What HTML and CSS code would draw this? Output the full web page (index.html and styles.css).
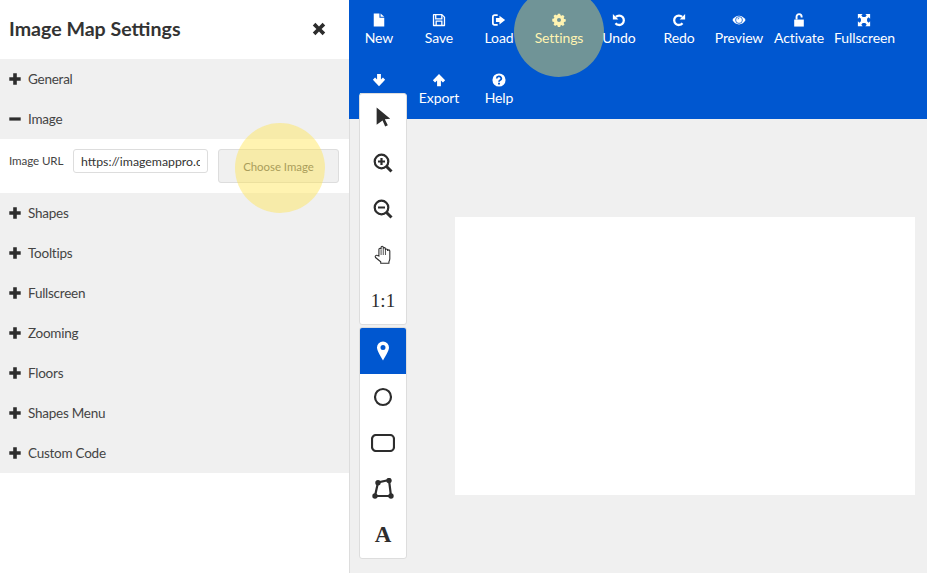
FILE: index.html
```html
<!DOCTYPE html>
<html lang="en">
<head>
    <meta charset="UTF-8">
    <title>Image Map Settings</title>
    <link rel="stylesheet" href="styles.css">
</head>
<body>

    <svg class="icon-defs" width="0" height="0">
        <symbol id="i-plus" viewBox="0 0 12 12"><path d="M4.200 0.300h3.600v3.900h3.900v3.600H7.800v3.900H4.200V7.800H0.300V4.200h3.900z"/></symbol>
    </svg>

    <div class="app">
        <!-- Left settings panel -->
        <aside class="sidebar">
            <header class="sidebar-head">
                <h1>Image Map Settings</h1>
                <svg class="close-icon" viewBox="0 0 14 14"><path d="M3.400 0.800L7 4.400l3.600-3.600 2.600 2.600L9.600 7l3.600 3.600-2.600 2.600L7 9.600l-3.600 3.600-2.600-2.600L4.400 7 0.800 3.400z"/></svg>
            </header>
            <div class="accordion">
                <div class="acc-row"><svg class="acc-icon"><use href="#i-plus"/></svg>General</div>
                <div class="acc-row"><svg class="acc-icon" viewBox="0 0 12 12"><path d="M0.300 4.400h11.400v3.200H0.300z"/></svg>Image</div>
                <div class="acc-body">
                    <label class="url-label" for="image-url">Image URL</label>
                    <input class="url-input" id="image-url" type="text" value="https://imagemappro.com/uploads/demo.jpg">
                    <button class="choose-btn">Choose Image</button>
                </div>
                <div class="acc-row"><svg class="acc-icon"><use href="#i-plus"/></svg>Shapes</div>
                <div class="acc-row"><svg class="acc-icon"><use href="#i-plus"/></svg>Tooltips</div>
                <div class="acc-row"><svg class="acc-icon"><use href="#i-plus"/></svg>Fullscreen</div>
                <div class="acc-row"><svg class="acc-icon"><use href="#i-plus"/></svg>Zooming</div>
                <div class="acc-row"><svg class="acc-icon"><use href="#i-plus"/></svg>Floors</div>
                <div class="acc-row"><svg class="acc-icon"><use href="#i-plus"/></svg>Shapes Menu</div>
                <div class="acc-row"><svg class="acc-icon"><use href="#i-plus"/></svg>Custom Code</div>
            </div>
        </aside>

        <main class="main">
            <!-- Top toolbar -->
            <nav class="toolbar">
                <div class="tb-btn">
                    <svg viewBox="0 0 16 16"><path d="M2 0.500h6.500v5h5.500v10H2z"/><path d="M9.800 0.500L14 4.400H9.800z"/></svg>
                    <span>New</span>
                </div>
                <div class="tb-btn">
                    <svg viewBox="0 0 16 16"><path fill-rule="evenodd" d="M2 1h9.500L15 4.500v9.700a.8.8 0 0 1-.8.8H1.800a.8.8 0 0 1-.8-.8V2a1 1 0 0 1 1-1zM5 2.500v3.500h5.500V2.500zM2.500 2.500v11h1.500V8.500h8v5h1.500V5L12 3v4.500H3.500V2.500zM5.500 10v3.500h5V10z"/></svg>
                    <span>Save</span>
                </div>
                <div class="tb-btn">
                    <svg viewBox="0 0 16 16"><path d="M8.500 3L15 8l-6.500 5V10.300H4.500V5.700h4z"/><path d="M6.500 2.500H3a2 2 0 0 0-2 2v7a2 2 0 0 0 2 2h3.500" fill="none" stroke="#fff" stroke-width="2"/></svg>
                    <span>Load</span>
                </div>
                <div class="tb-btn">
                    <svg viewBox="0 0 16 16"><path fill-rule="evenodd" d="M6.700 .8h2.600l.4 1.900 1.200.5 1.600-1 1.800 1.800-1 1.600.5 1.200 1.900.4v2.600l-1.900.4-.5 1.200 1 1.600-1.800 1.800-1.600-1-1.200.5-.4 1.900H6.700l-.4-1.900-1.200-.5-1.600 1-1.800-1.800 1-1.600-.5-1.200-1.900-.4V6.700l1.900-.4.5-1.200-1-1.600 1.800-1.800 1.600 1 1.200-.5zM8 5.700a2.300 2.300 0 1 0 0 4.600 2.300 2.300 0 0 0 0-4.600z"/></svg>
                    <span>Settings</span>
                </div>
                <div class="tb-btn">
                    <svg viewBox="0 0 16 16"><path d="M4.400 4.400A5.400 5.400 0 1 1 4 11.800" fill="none" stroke="#fff" stroke-width="2.600"/><path d="M1 1L7.300 7.300H1z"/></svg>
                    <span>Undo</span>
                </div>
                <div class="tb-btn">
                    <svg viewBox="0 0 16 16"><path d="M11.600 4.400A5.400 5.400 0 1 0 12 11.800" fill="none" stroke="#fff" stroke-width="2.600"/><path d="M15 1L8.700 7.300H15z"/></svg>
                    <span>Redo</span>
                </div>
                <div class="tb-btn">
                    <svg class="tb-eye" viewBox="0 0 16 16"><path d="M8 3c3.200 0 6 2 7.500 5-1.500 3-4.300 5-7.500 5S2 11 .5 8C2 5 4.800 3 8 3z"/><circle cx="8" cy="8" r="3.900" fill="none" stroke="#0057d0" stroke-width="0.900"/><path d="M7.800 5.400a1.200 1.200 0 0 1-1.300 1.400" fill="none" stroke="#0057d0" stroke-width="0.900"/></svg>
                    <span>Preview</span>
                </div>
                <div class="tb-btn">
                    <svg viewBox="0 0 16 16"><path d="M2.500 7.500h11v8h-11z"/><path d="M5.200 7.500V4.200a2.900 2.900 0 0 1 5.800 0V5" fill="none" stroke="#fff" stroke-width="2.200"/></svg>
                    <span>Activate</span>
                </div>
                <div class="tb-btn">
                    <svg viewBox="0 0 16 16"><path d="M1 1h5.500L4.900 2.700 6.500 4.500h3l1.600-1.800L9.500 1H15v5.500l-1.700-1.600-1.800 1.600v3l1.800 1.600 1.700-1.600V15H9.500l1.600-1.700-1.600-1.800h-3l-1.600 1.800L6.500 15H1V9.500l1.700 1.600 1.800-1.600v-3L2.700 4.900 1 6.500z"/></svg>
                    <span>Fullscreen</span>
                </div>
                <div class="tb-btn">
                    <svg viewBox="0 0 16 16"><path d="M5.800 1h4.400v6.500l2.300-2.300 2.500 2.400L8 15 1 7.600l2.500-2.400 2.300 2.300z"/></svg>
                    <span>Import</span>
                </div>
                <div class="tb-btn">
                    <svg viewBox="0 0 16 16"><path d="M5.800 15h4.400V8.500l2.300 2.300 2.500-2.400L8 1 1 8.400l2.500 2.400 2.300-2.300z"/></svg>
                    <span>Export</span>
                </div>
                <div class="tb-btn">
                    <svg viewBox="0 0 16 16"><circle cx="8" cy="8" r="7.500"/><path d="M5.400 6.200a2.600 2.300 0 1 1 3.800 2.100c-.9.500-1.200.8-1.200 1.700" fill="none" stroke="#0057d0" stroke-width="2"/><path d="M6.900 11h2.200v2.200H6.900z" fill="#0057d0"/></svg>
                    <span>Help</span>
                </div>
            </nav>

            <div class="stage">
                <div class="canvas"></div>
            </div>

            <!-- Floating tools -->
            <div class="tools">
                <div class="tool-group">
                    <div class="tool">
                        <svg viewBox="0 0 20 22"><path d="M3 0.500L18 13l-6 .6 3.300 6.400-2.900 1.500-2.900-6.700L3 19.500z"/></svg>
                    </div>
                    <div class="tool">
                        <svg viewBox="0 0 20 20"><circle cx="8.500" cy="8.500" r="6.800" class="line"/><path d="M13.500 13.500l5 5" class="line thick"/><path d="M8.500 5v7M5 8.500h7" class="line"/></svg>
                    </div>
                    <div class="tool">
                        <svg viewBox="0 0 20 20"><circle cx="8.500" cy="8.500" r="6.800" class="line"/><path d="M13.500 13.500l5 5" class="line thick"/><path d="M5 8.500h7" class="line"/></svg>
                    </div>
                    <div class="tool">
                        <svg viewBox="0 0 20 22"><path d="M5.500 12V4.800a1.200 1.200 0 0 1 2.400 0V2.600a1.200 1.200 0 0 1 2.400 0v1.500a1.200 1.200 0 0 1 2.400 0v1.500a1.200 1.200 0 0 1 2.400 0v1a1.200 1.200 0 0 1 2.400 0V15c0 1.500-.5 2.500-1 3.500v1.500H7.500v-1.500L1.800 13.800c-1-1.500.5-3 2-2.300z" fill="#fff" stroke="#2d2d2d" stroke-width="1.200"/><path d="M7.900 5v6M10.300 4v7M12.700 5v6" stroke="#2d2d2d" stroke-width="0.900" fill="none"/></svg>
                    </div>
                    <div class="tool tool-text">1:1</div>
                </div>
                <div class="tool-group">
                    <div class="tool tool-active">
                        <svg viewBox="0 0 14 20"><path fill-rule="evenodd" d="M7 .5a6 6 0 0 1 6 6c0 3-3.500 8.500-6 13-2.500-4.500-6-10-6-13a6 6 0 0 1 6-6zm0 3.500a2.500 2.500 0 1 0 0 5 2.500 2.500 0 0 0 0-5z" fill="#fff"/></svg>
                    </div>
                    <div class="tool">
                        <svg viewBox="0 0 20 20"><circle cx="10" cy="10" r="8" class="line"/></svg>
                    </div>
                    <div class="tool">
                        <svg class="wide" viewBox="0 0 24 18"><rect x="1" y="1" width="22" height="16" rx="4" class="line"/></svg>
                    </div>
                    <div class="tool">
                        <svg class="poly" viewBox="0 0 22 22"><path d="M3 18h16L17 2 6 4.500z" class="line"/><circle cx="3" cy="18" r="2.700"/><circle cx="19" cy="18" r="2.700"/><circle cx="17" cy="2.500" r="2.700"/><circle cx="6" cy="4.800" r="2.700"/></svg>
                    </div>
                    <div class="tool tool-letter">A</div>
                </div>
            </div>
        </main>
    </div>

    <!-- Click highlights from the recording -->
    <div class="spot spot-settings"></div>
    <div class="spot spot-choose"></div>

</body>
</html>
```
FILE: styles.css
```css
/* Page */
body {
    margin: 0;
    font-family: Lato, "Open Sans", sans-serif;
    font-size: 14px;
    color: #333;
    background-color: #fff;
    overflow: hidden;
}

.icon-defs {
    position: absolute;
}

.app {
    display: flex;
    height: 573px;
}

/* Sidebar */
.sidebar {
    width: 349px;
    flex-shrink: 0;
    border-right: 1px solid #ddd;
    background-color: #fff;
}

.sidebar-head {
    height: 59px;
    box-sizing: border-box;
    padding: 0 23px 2px 9px;
    display: flex;
    align-items: center;
    justify-content: space-between;
}

.sidebar-head h1 {
    margin: 0;
    font-size: 19.6px;
    font-weight: 700;
    color: #333;
}

.close-icon {
    width: 14px;
    height: 14px;
    fill: #2d2d2d;
}

.accordion {
    background-color: #f0f0f0;
}

.acc-row {
    height: 40px;
    padding-left: 9px;
    display: flex;
    align-items: center;
    gap: 7px;
    font-size: 13.5px;
    letter-spacing: -0.25px;
    color: #444;
}

.acc-icon {
    width: 12px;
    height: 12px;
    fill: #2d2d2d;
}

.acc-body {
    height: 54px;
    box-sizing: border-box;
    padding: 10px 10px 10px 9px;
    background-color: #fff;
    display: flex;
    align-items: flex-start;
}

.url-label {
    width: 64px;
    flex-shrink: 0;
    line-height: 24px;
    font-size: 11.6px;
    letter-spacing: -0.1px;
    color: #444;
}

.url-input {
    width: 135px;
    height: 24px;
    box-sizing: border-box;
    padding: 0 7px;
    border: 1px solid #ddd;
    border-radius: 3px;
    font-family: inherit;
    font-size: 12.3px;
    color: #333;
}

.choose-btn {
    width: 121px;
    height: 34px;
    margin-left: 10px;
    padding: 0;
    border: 1px solid #ddd;
    border-radius: 3px;
    background-color: #f0f0f0;
    font-family: inherit;
    font-size: 11.4px;
    color: #666;
}

/* Toolbar */
.main {
    flex: 1;
    position: relative;
    display: flex;
    flex-direction: column;
    min-width: 0;
}

.toolbar {
    height: 119px;
    margin-left: -1px;
    background-color: #0057d0;
    display: flex;
    flex-wrap: wrap;
    align-content: flex-start;
}

.tb-btn {
    min-width: 60px;
    height: 60px;
    box-sizing: border-box;
    padding: 13px 5px 0;
    display: flex;
    flex-direction: column;
    align-items: center;
    color: #fff;
    font-size: 14px;
    letter-spacing: -0.1px;
    line-height: 18px;
}

.tb-btn svg {
    width: 14px;
    height: 14px;
    fill: #fff;
    margin-bottom: 2px;
}

.tb-btn svg.tb-eye {
    width: 16px;
}

/* Canvas area */
.stage {
    flex: 1;
    background-color: #f0f0f0;
    padding: 98px 12px 0 105px;
}

.canvas {
    height: 278px;
    background-color: #fff;
}

/* Floating tools */
.tools {
    position: absolute;
    left: 9px;
    top: 93px;
    display: flex;
    flex-direction: column;
    gap: 2px;
}

.tool-group {
    width: 46px;
    border: 1px solid #ddd;
    border-radius: 3px;
    background-color: #fff;
    overflow: hidden;
}

.tool {
    height: 46px;
    display: flex;
    align-items: center;
    justify-content: center;
    color: #2d2d2d;
}

.tool svg {
    width: 20px;
    height: 20px;
    fill: #2d2d2d;
}

.tool svg.wide {
    width: 24px;
    height: 18px;
}

.tool svg.poly {
    width: 22px;
    height: 22px;
}

.tool .line {
    fill: none;
    stroke: #2d2d2d;
    stroke-width: 2.2;
}

.tool .thick {
    stroke-width: 3;
}

.tool-active {
    background-color: #0057d0;
}

.tool-text {
    font-family: "Liberation Serif", serif;
    font-size: 19px;
}

.tool-letter {
    font-family: "Liberation Serif", serif;
    font-size: 23px;
    font-weight: 700;
}

/* Highlights */
.spot {
    position: absolute;
    width: 90px;
    height: 90px;
    border-radius: 50%;
    background-color: rgba(255, 227, 78, 0.44);
    pointer-events: none;
}

.spot-settings {
    left: 514px;
    top: -13px;
}

.spot-choose {
    left: 235px;
    top: 123px;
}
```
